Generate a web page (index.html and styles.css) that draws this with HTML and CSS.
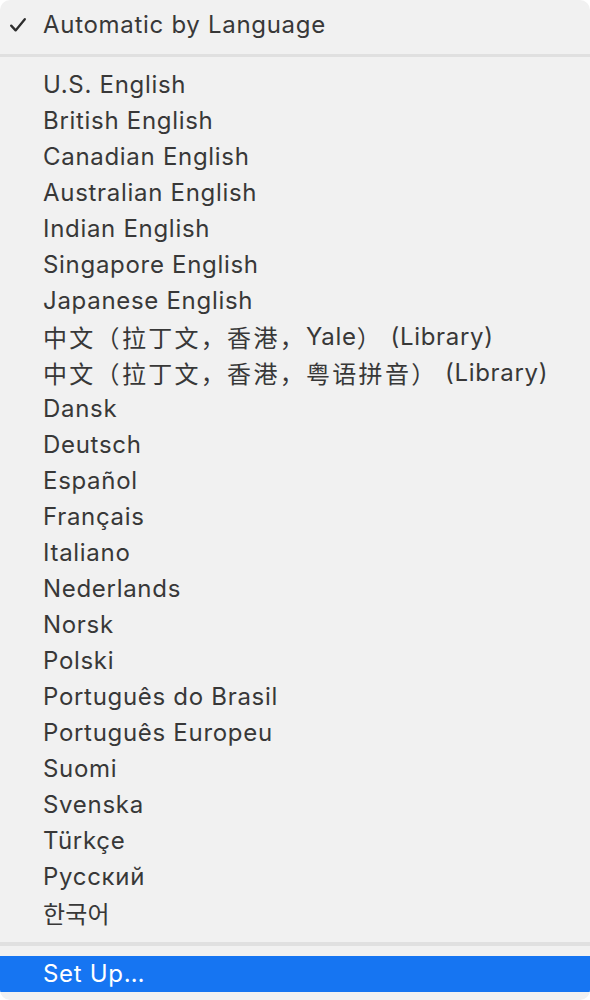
FILE: index.html
```html
<!DOCTYPE html>
<html lang="en">
<head>
<meta charset="utf-8">
<title>Input menu</title>
<link rel="stylesheet" href="styles.css">
</head>
<body>
<div class="menu">
  <div class="item checked"><span class="check"><svg width="18" height="16" viewBox="0 0 18 16"><path d="M2.2 8.6 L6.6 13.4 L15.8 2.2" fill="none" stroke="#2e2e2e" stroke-width="2.3" stroke-linecap="round" stroke-linejoin="round"/></svg></span>Automatic by Language</div>
  <div class="sep"></div>
  <div class="item">U.S. English</div>
  <div class="item">British English</div>
  <div class="item">Canadian English</div>
  <div class="item">Australian English</div>
  <div class="item">Indian English</div>
  <div class="item">Singapore English</div>
  <div class="item">Japanese English</div>
  <div class="item"><span class="cjk">中文（拉丁文，香港，</span>Yale<span class="cjk">）</span>&nbsp;(Library)</div>
  <div class="item"><span class="cjk">中文（拉丁文，香港，粤语拼音）</span>&nbsp;(Library)</div>
  <div class="item">Dansk</div>
  <div class="item">Deutsch</div>
  <div class="item">Español</div>
  <div class="item">Français</div>
  <div class="item">Italiano</div>
  <div class="item">Nederlands</div>
  <div class="item">Norsk</div>
  <div class="item">Polski</div>
  <div class="item">Português do Brasil</div>
  <div class="item">Português Europeu</div>
  <div class="item">Suomi</div>
  <div class="item">Svenska</div>
  <div class="item">Türkçe</div>
  <div class="item">Русский</div>
  <div class="item"><span class="ko">한국어</span></div>
  <div class="sep sep2"></div>
  <div class="item selected">Set Up…</div>
</div>
</body>
</html>
```
FILE: styles.css
```css
html, body {
  margin: 0;
  padding: 0;
  background: #ffffff;
}
.menu {
  width: 590px;
  height: 1000px;
  box-sizing: border-box;
  background: #f1f1f1;
  border-radius: 10px;
  padding-top: 7px;
  font-family: "Inter", "Noto Sans CJK SC", "Noto Sans CJK KR", sans-serif;
  font-size: 24px;
  letter-spacing: 0.7px;
  color: #383838;
  overflow: hidden;
}
.item {
  height: 36px;
  line-height: 36px;
  padding-left: 43px;
  white-space: nowrap;
  display: flex;
  align-items: center;
  position: relative;
}
.cjk {
  font-family: "Noto Sans CJK SC", sans-serif;
  font-size: 24px;
  letter-spacing: 2.3px;
}
.ko {
  font-family: "Noto Sans CJK KR", sans-serif;
  font-size: 24px;
  letter-spacing: 0.2px;
}
.check {
  position: absolute;
  left: 9px;
  top: 10px;
  width: 18px;
  height: 16px;
  display: block;
}
.check svg { display: block; }
.sep {
  height: 3px;
  background: #e0e0e0;
  margin: 11px 0 10px;
}
.sep2 {
  height: 4px;
  margin: 11px 0 10px;
}
.selected {
  background: #1675f2;
  color: #ffffff;
}
```
